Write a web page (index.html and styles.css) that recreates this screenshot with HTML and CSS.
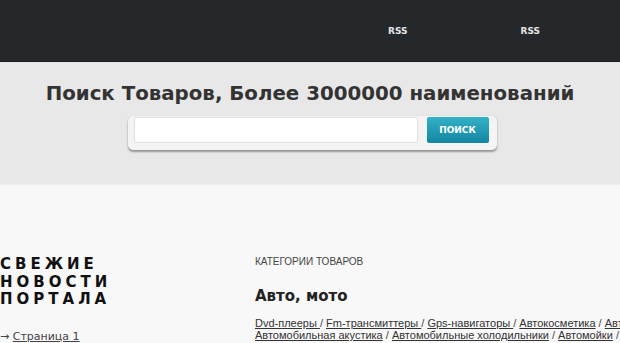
FILE: index.html
```html
<!DOCTYPE html>
<html lang="ru">
<head>
  <meta charset="UTF-8">
  <meta name="viewport" content="width=device-width, initial-scale=1.0">
  <title>Поиск Товаров</title>

  <link rel="stylesheet" href="styles.css">
</head>
<body>
  <div class="header">
    <div class="header-links">
      <a class="rss" href="#">RSS</a>
      <a class="rss" href="#">RSS</a>
    </div>
  </div>

  <div class="search-band">
    <h1 class="search-title">Поиск Товаров, Более 3000000 наименований</h1>
    <div class="search-box">
      <input class="search-input" type="text">
      <div class="search-button">ПОИСК</div>
    </div>
  </div>

  <div class="content">
    <!-- Left column -->
    <div class="news">
      <h2 class="news-title">Свежие новости портала</h2>
      <div class="news-page">&rarr; <a href="#">Страница 1</a></div>
    </div>

    <!-- Right column -->
    <div class="categories">
      <div class="categories-label">Категории товаров</div>
      <h3 class="category-name">Авто, мото</h3>
      <div class="category-links">
        <a href="#">Dvd-плееры </a> / <a href="#">Fm-трансмиттеры </a> / <a href="#">Gps-навигаторы </a> / <a href="#">Автокосметика</a> / <a href="#">Автомагнитолы</a> / <a href="#">Автомобильная акустика</a> / <a href="#">Автомобильные холодильники</a> / <a href="#">Автомойки</a> / <a href="#">Автосигнализации</a>
      </div>
    </div>
  </div>
</body>
</html>
```

FILE: styles.css
```css
html, body {
  margin: 0;
  overflow: hidden;
}

body {
  background-color: #f8f8f8;
  font-family: 'DejaVu Sans', sans-serif;
  color: #222;
}

.header {
  height: 61px;
  background-color: #25282a;
  border-bottom: 1px solid #1b1d1e;
}

.header-links {
  display: flex;
  padding: 26px 0 0 388px;
  gap: 113px;
}

.rss {
  color: #e4e4e4;
  font-size: 9px;
  font-weight: bold;
  text-decoration: none;
}

.search-band {
  height: 122px;
  background-color: #e8e8e8;
  border-bottom: 1px solid #eeeeee;
  display: flex;
  flex-direction: column;
  align-items: center;
}

.search-title {
  margin: 20px 0 0;
  font-size: 19.8px;
  font-weight: bold;
  color: #333;
  white-space: nowrap;
}

.search-box {
  margin: 11px 0 0 4px;
  width: 355px;
  display: flex;
  align-items: center;
  gap: 9px;
  padding: 1px 8px 7px 6px;
  background-color: #f4f4f4;
  border-radius: 5px;
  box-shadow: 0 2px 2px rgba(0, 0, 0, 0.35), 0 0 1px rgba(0, 0, 0, 0.2);
}

.search-input {
  flex: 1;
  height: 26px;
  box-sizing: border-box;
  border: 1px solid #e0e0e0;
  border-radius: 2px;
  background-color: #fff;
  outline: none;
}

.search-button {
  width: 62px;
  height: 26px;
  line-height: 26px;
  text-align: center;
  color: #fff;
  font-size: 9px;
  font-weight: bold;
  border-radius: 2px;
  background: linear-gradient(#33b2c8, #1485a1);
  margin-top: -1px;
}

.content {
  display: flex;
  padding-top: 71px;
}

.news {
  width: 255px;
  flex-shrink: 0;
}

.news-title {
  margin: 0;
  text-transform: uppercase;
  font-size: 15px;
  line-height: 17.5px;
  letter-spacing: 4px;
  font-weight: bold;
  color: #111;
  width: 120px;
}

.news-page {
  margin-top: 21px;
  font-size: 11px;
  color: #444;
}

.news-page a {
  color: #444;
}

.categories {
  flex-shrink: 0;
  width: 470px;
}

.categories-label {
  margin-top: 0;
  font-family: 'Liberation Sans', sans-serif;
  text-transform: uppercase;
  font-size: 10px;
  color: #444;
}

.category-name {
  margin: 20px 0 0;
  font-size: 15px;
  font-weight: bold;
  color: #222;
}

.category-links {
  margin-top: 12px;
  font-family: 'Liberation Sans', sans-serif;
  font-size: 11px;
  line-height: 12px;
  color: #444;
}

.category-links a {
  color: #333;
}
```
